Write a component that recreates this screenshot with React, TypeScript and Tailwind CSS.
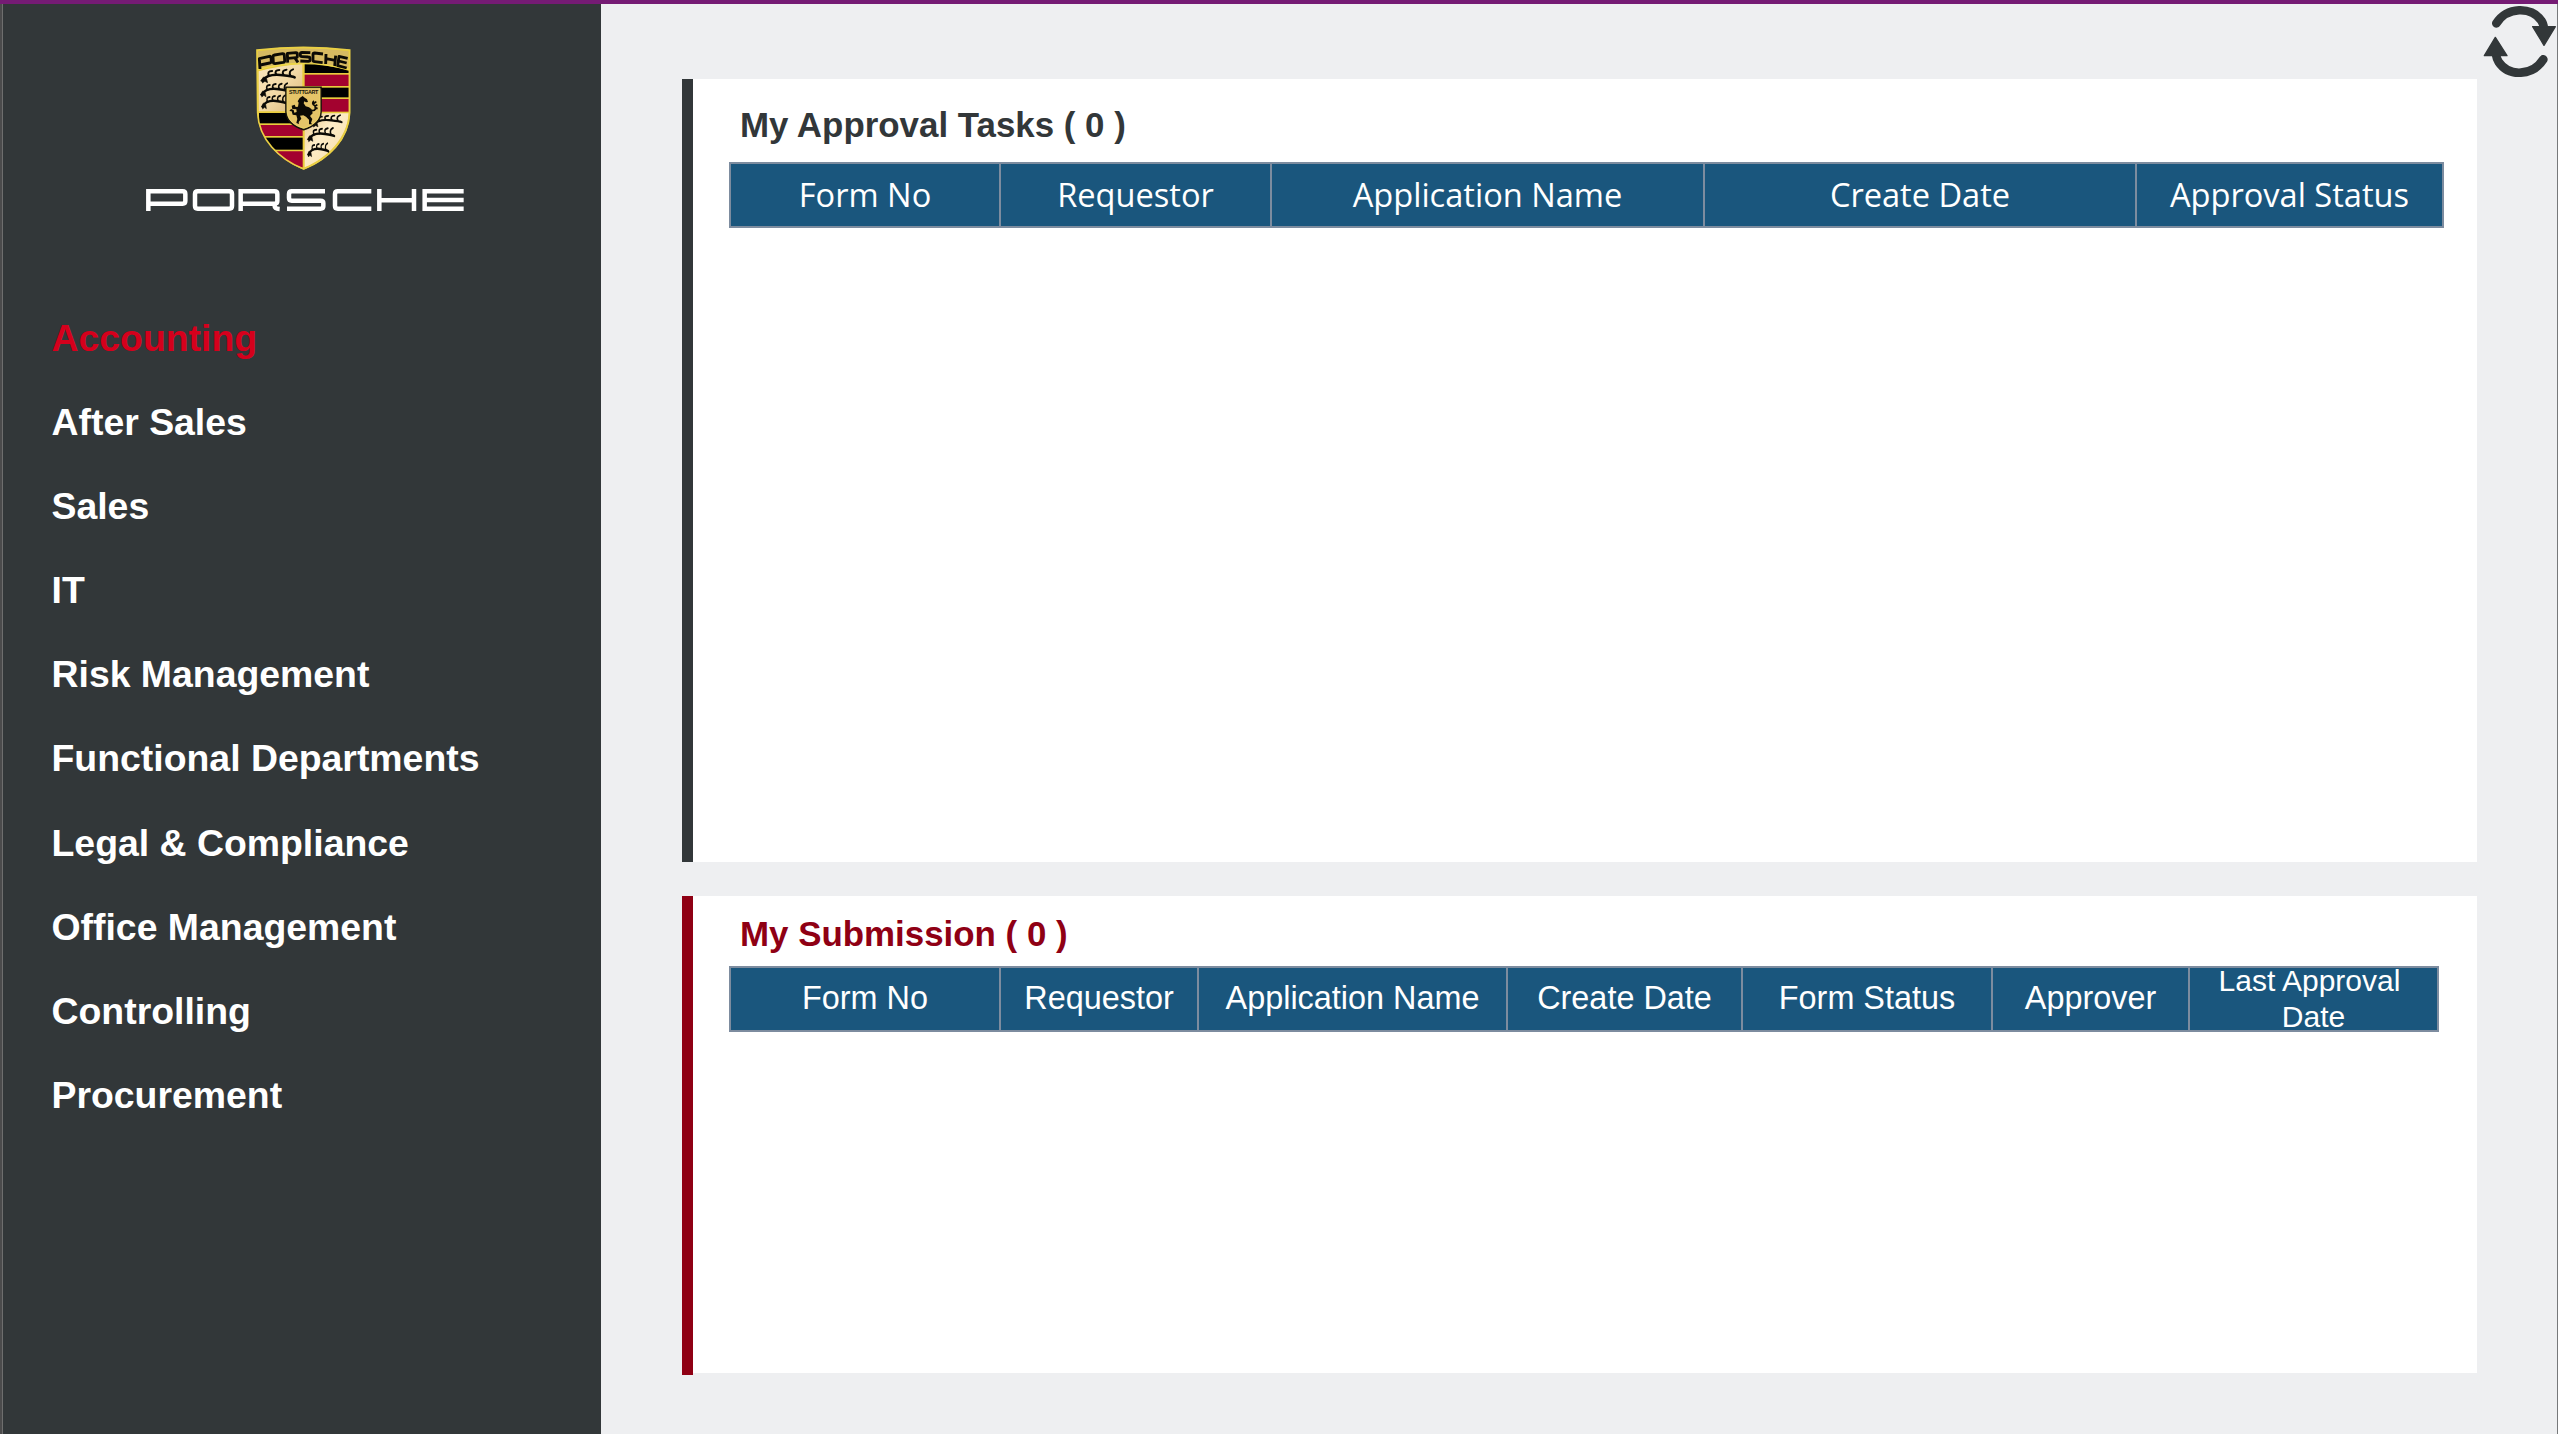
import React from 'react';

const menu = [
  'Accounting', 'After Sales', 'Sales', 'IT', 'Risk Management', 'Functional Departments',
  'Legal & Compliance', 'Office Management', 'Controlling', 'Procurement',
];

function Antler({ x, y, w, h }: { x: number; y: number; w: number; h: number }) {
  return (
    <g transform={`translate(${x} ${y}) scale(${w / 108} ${h / 44})`} fill="none" stroke="#0b0a06" strokeLinecap="round">
      <path d="M5 36 C16 22 36 17 60 19 C80 21 96 22 104 26" strokeWidth="7.5" />
      <path d="M26 22 C20 12 24 7 35 7 M48 18 C42 9 47 4 57 4 M70 19 C64 9 69 4 79 3 M91 21 C86 11 90 5 99 2" strokeWidth="6" />
      <path d="M8 26 L0 37 L7 35 L5 43 L13 38 L21 42 L18 30 Z" fill="#0b0a06" strokeWidth="2" />
    </g>
  );
}

function Crest() {
  return (
    <svg width="130" height="140" viewBox="0 0 390 420" className="block">
      <defs>
        <linearGradient id="cream" x1="0" y1="0" x2="1" y2="1">
          <stop offset="0" stopColor="#fbe8bf" /><stop offset="0.5" stopColor="#f3d9a6" /><stop offset="1" stopColor="#d8b679" />
        </linearGradient>
        <linearGradient id="cream2" x1="0" y1="0" x2="1" y2="1">
          <stop offset="0" stopColor="#e9c78c" /><stop offset="0.4" stopColor="#fdecc8" /><stop offset="1" stopColor="#f5dba4" />
        </linearGradient>
        <clipPath id="shield"><path d="M50 42 Q190 24 330 42 L330 230 C328 310 265 372 191 401 C118 372 55 310 52 230 Z" /></clipPath>
      </defs>
      <g clipPath="url(#shield)">
        <rect x="45" y="25" width="290" height="380" fill="#e8cb3c" />
        <path d="M56 106 Q120 88 187 84 V226 H56Z" fill="url(#cream)" />
        <path d="M194 80 Q265 86 326 104 V111 H194Z" fill="#000" />
        <rect x="194" y="116" width="132" height="34" fill="#a3022f" />
        <rect x="194" y="155" width="132" height="29" fill="#000" />
        <rect x="194" y="189" width="132" height="38" fill="#a3022f" />
        <path d="M194 232 H326 C322 306 262 366 194 394Z" fill="url(#cream2)" />
        <rect x="57" y="231" width="131" height="31" fill="#000" />
        <rect x="57" y="267" width="131" height="33" fill="#a3022f" />
        <rect x="57" y="305" width="131" height="36" fill="#000" />
        <path d="M57 346 H188 V395 Q140 380 57 346Z" fill="#a3022f" />
        <path d="M54 45 Q190 28 326 45 L326 98 Q190 64 54 98Z" fill="#d7ba62" />
      </g>
      <path d="M51 42 Q190 26 329 42 L329 230 C326 310 265 370 191 399 C118 370 56 310 53 230 Z" fill="none" stroke="#e9cf45" strokeWidth="5" />
      <path d="M54 100 Q190 66 326 100" fill="none" stroke="#f0d94c" strokeWidth="4" />
      <g fill="none" stroke="#0c0a05" strokeWidth="8.5" strokeLinejoin="round">
        <path d="M60 99 L58 68 L88 61 Q93 60 93 65 L94 76 Q94 80 89 81 L61 87" />
        <path d="M104 57 L128 53 Q133 53 133 58 L134 74 Q134 78 129 79 L105 83 Q100 83 100 79 L99 62 Q99 58 104 57Z" />
        <path d="M143 80 L142 52 L168 50 Q172 50 172 54 L172 61 Q172 65 168 65 L144 67 M164 65 L174 79" />
        <path d="M211 50 L186 49 Q181 49 181 54 V58 Q181 62 186 62 L205 63 Q210 63 210 68 V72 Q210 76 205 76 L181 75" />
        <path d="M249 54 L224 51 Q219 51 219 56 L219 73 Q219 77 224 77 L248 80" />
        <path d="M258 54 L257 84 M287 59 L284 90 M258 68 L286 73" />
        <path d="M323 67 L297 61 L293 89 L320 96 M296 75 L320 81" />
      </g>
      <Antler x={62} y={98} w={106} h={44} /><Antler x={61} y={140} w={88} h={44} /><Antler x={64} y={176} w={78} h={44} />
      <Antler x={216} y={236} w={92} h={38} /><Antler x={202} y={274} w={84} h={44} /><Antler x={202} y={320} w={66} h={44} />
      <path d="M138 154 H243 V228 C242 255 220 272 191 281 C161 272 140 255 138 228Z" fill="#e5c468" stroke="#17130a" strokeWidth="5" />
      <path d="M141 157 H240 V228 C239 252 218 269 191 277 C164 269 143 252 141 228Z" fill="none" stroke="#f1dc66" strokeWidth="2" />
      <text x="191" y="174" textAnchor="middle" textLength="88" fontFamily="Liberation Sans" fontWeight="700" fontSize="16" fill="#17130a">STUTTGART</text>
      <path d="M188 180 L194 185 L201 190 L204 198 L198 199 L193 196 L191 202 L197 211 L207 214 L215 220 L218 232 L210 240 L217 249 L213 261 L217 265 L207 265 L207 251 L198 242 L190 238 L180 239 L184 248 L176 258 L177 264 L169 261 L172 249 L169 238 L158 236 L155 226 L148 225 L153 219 L161 222 L163 230 L170 228 L169 220 L157 219 L155 209 L164 206 L167 213 L174 212 L176 200 L173 196 L179 186Z" fill="#0c0a05" />
      <path d="M216 224 C228 224 230 215 224 209 C216 204 217 199 222 195 M225 210 L232 206 M223 216 L233 217 M221 203 L229 197" fill="none" stroke="#0c0a05" strokeWidth="5" />
    </svg>
  );
}

function Wordmark() {
  return (
    <svg width="350" height="60" viewBox="0 0 1050 180" className="block" fill="none" stroke="#fff" strokeWidth="13.5">
      <path d="M55 123 V64 H158 Q166 64 166 72 V93 Q166 101 158 101 H60" />
      <path d="M203 64 H298 Q306 64 306 72 V108 Q306 116 298 116 H203 Q195 116 195 108 V72 Q195 64 203 64Z" />
      <path d="M332 123 V64 H434 Q442 64 442 72 V93 Q442 101 434 101 H336 M434 101 V108 Q434 116 449 117" />
      <path d="M585 64 H485 Q477 64 477 72 V84 Q477 92 485 92 H572 Q580 92 580 99 V109 Q580 116 572 116 H471" />
      <path d="M724 64 H623 Q615 64 615 72 V108 Q615 116 623 116 H724" />
      <path d="M748 57 V123 M852 57 V123 M750 91 H850" />
      <path d="M1001 64 H884 V116 H1001 M888 90 H1001" />
    </svg>
  );
}

function Refresh() {
  return (
    <svg width="100" height="90" viewBox="0 0 300 270" className="block">
      <g fill="none" stroke="#323739" strokeWidth="26" strokeLinecap="round">
        <path d="M115 70 C147 20 220 18 250 62 Q256 70 258 86" />
        <path d="M256 178 C224 228 153 232 122 186 Q116 177 113 160" />
      </g>
      <g fill="#323739" stroke="#323739" strokeWidth="4" strokeLinejoin="round">
        <path d="M252 80 H292 L258 136 L224 80Z" />
        <path d="M79 167 H147 L112 112Z" />
      </g>
    </svg>
  );
}

type Col = { label: React.ReactNode; w: string; small?: boolean };

function HeaderRow({ cols, font }: { cols: Col[]; font: string }) {
  return (
    <div className={`flex h-[66px] w-max border border-[#7d8c9f] text-white ${font}`}>
      {cols.map((c, i) => (
        <div
          key={i}
          className={`flex shrink-0 items-center justify-center border border-[#7d8c9f] bg-[#1a567d] text-center ${c.w} ${c.small ? 'text-[30px] leading-[36px]' : 'whitespace-nowrap pb-[var(--lift)]'}`}
        >
          {c.label}
        </div>
      ))}
    </div>
  );
}

const tasks: Col[] = [
  { label: 'Form No', w: 'w-[270px]' },
  { label: 'Requestor', w: 'w-[271px]' },
  { label: 'Application Name', w: 'w-[433px]' },
  { label: 'Create Date', w: 'w-[432px]' },
  { label: 'Approval Status', w: 'w-[307px]' },
];

const submissions: Col[] = [
  { label: 'Form No', w: 'w-[270px]' },
  { label: 'Requestor', w: 'w-[198px]' },
  { label: 'Application Name', w: 'w-[309px]' },
  { label: 'Create Date', w: 'w-[235px]' },
  { label: 'Form Status', w: 'w-[250px]' },
  { label: 'Approver', w: 'w-[197px]' },
  { label: <div><div className="pr-2">Last Approval</div><div>Date</div></div>, w: 'w-[249px]', small: true },
];

export default function App() {
  return (
    <div className="flex h-[1434px] w-[2558px] flex-col overflow-hidden bg-[#eeeff1] font-['Liberation_Sans',Arial,sans-serif]">
      <div className="h-1 shrink-0 bg-[#751b74]" />
      <div className="flex min-h-0 flex-1 border-r border-[#77797b]">
        <aside className="w-[601px] shrink-0 border-l-2 border-[#4b4b4c] bg-[#323739]">
          <div className="h-full border-l border-[#6e6e6e]">
            <div className="pl-[237px] pt-8"><Crest /></div>
            <div className="-mt-[6px] pl-[127px]"><Wordmark /></div>
            <nav className="mt-[66px] flex flex-col pl-[48.5px] text-[37.4px] font-bold text-white">
              {menu.map((m, i) => (
                <a key={m} className={`flex h-[84.1px] items-center whitespace-nowrap ${i === 0 ? 'text-[#d5001c]' : ''}`}>{m}</a>
              ))}
            </nav>
          </div>
        </aside>
        <main className="relative flex-1 pl-[81px] pt-[75px]">
          <section className="h-[783px] w-[1795px] border-l-[11px] border-[#323739] bg-white pl-9">
            <h2 className="h-[83px] pl-[11px] pt-[26px] text-[34.9px] leading-[40px] font-bold text-[#323739]">My Approval Tasks ( 0 )</h2>
            <HeaderRow cols={tasks} font="font-['Open_Sans',sans-serif] text-[32.6px] [--lift:0px]" />
          </section>
          <section className="mt-[34px] flex w-[1795px] items-start">
            <div className="h-[479px] w-[11px] bg-[#8f0014]" />
            <div className="h-[477px] flex-1 bg-white pl-9">
              <h2 className="h-[70px] pl-[11px] pt-[18px] text-[34.9px] leading-[40px] font-bold text-[#8f0014]">My Submission ( 0 )</h2>
              <HeaderRow cols={submissions} font="text-[32.4px] [--lift:2px]" />
            </div>
          </section>
          <button aria-label="Refresh" className="absolute -top-1 right-[-1px]"><Refresh /></button>
        </main>
      </div>
    </div>
  );
}
